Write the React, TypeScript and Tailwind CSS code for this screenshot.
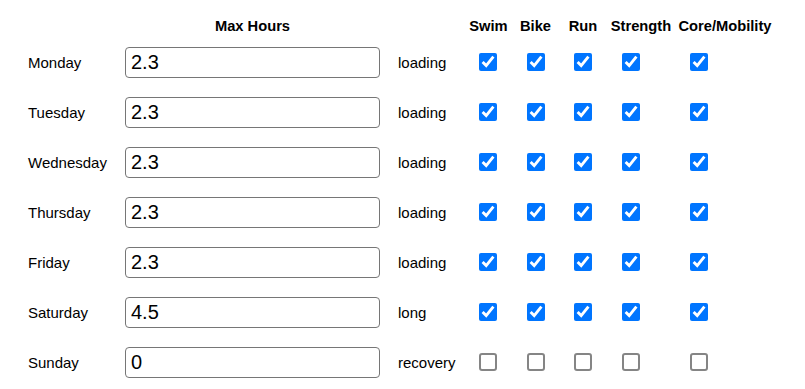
import React from 'react';

type Day = { name: string; hours: string; phase: string; on: boolean };

const DAYS: Day[] = [
  { name: 'Monday', hours: '2.3', phase: 'loading', on: true },
  { name: 'Tuesday', hours: '2.3', phase: 'loading', on: true },
  { name: 'Wednesday', hours: '2.3', phase: 'loading', on: true },
  { name: 'Thursday', hours: '2.3', phase: 'loading', on: true },
  { name: 'Friday', hours: '2.3', phase: 'loading', on: true },
  { name: 'Saturday', hours: '4.5', phase: 'long', on: true },
  { name: 'Sunday', hours: '0', phase: 'recovery', on: false },
];

// left margin before each checkbox
const SPORTS = [
  { key: 'swim', ml: 'ml-0' },
  { key: 'bike', ml: 'ml-[30px]' },
  { key: 'run', ml: 'ml-[29px]' },
  { key: 'strength', ml: 'ml-[30px]' },
  { key: 'core', ml: 'ml-[50px]' },
];

const Check: React.FC<{ checked: boolean; className?: string }> = ({ checked, className }) => (
  <input
    type="checkbox"
    defaultChecked={checked}
    className={`w-[18px] h-[18px] shrink-0 appearance-none border-2 border-[#858585] rounded-[3px] bg-white checked:appearance-auto checked:border-0 ${className ?? ''}`}
  />
);

export default function App() {
  return (
    <div
      className="w-[805px] h-[389px] bg-white text-black text-[15px] leading-[17px] overflow-hidden"
      style={{ fontFamily: '"Liberation Sans", Arial, sans-serif' }}
    >
      {/* ── Header ── */}
      <div className="flex h-[37px] pt-[18px] font-bold text-[14.7px]">
        <div className="w-[125px] shrink-0" />
        <div className="w-[255px] shrink-0 text-center">Max Hours</div>
        <div className="w-[84px] shrink-0" />
        <div className="w-[49px] shrink-0 text-center">Swim</div>
        <div className="w-[45px] shrink-0 text-center">Bike</div>
        <div className="w-[50px] shrink-0 text-center">Run</div>
        <div className="w-[66px] shrink-0 text-center">Strength</div>
        <div className="w-[102px] shrink-0 text-center">Core/Mobility</div>
      </div>

      {/* ── Rows ── */}
      {DAYS.map(d => (
        <div key={d.name} className="flex items-center h-[50px] pl-[28px]">
          <div className="w-[97px] shrink-0">{d.name}</div>
          <input
            type="text"
            defaultValue={d.hours}
            className="w-[255px] h-[31px] shrink-0 border border-[#767676] rounded-[4px] px-[5px] text-[20px] leading-[24px] bg-white outline-none"
          />
          <div className="w-[81px] shrink-0 ml-[18px]">{d.phase}</div>
          {SPORTS.map(s => (
            <Check key={s.key} checked={d.on} className={s.ml} />
          ))}
        </div>
      ))}
    </div>
  );
}
